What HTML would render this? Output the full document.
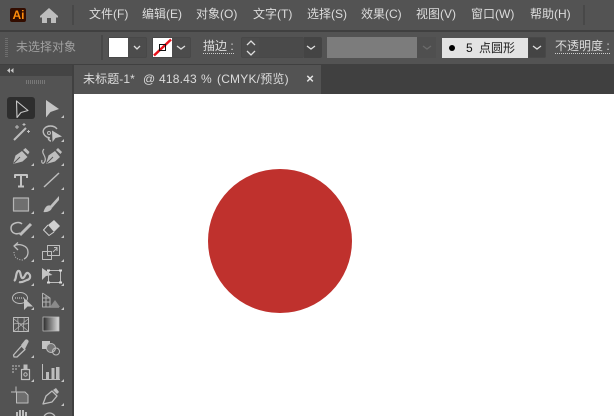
<!DOCTYPE html>
<html><head><meta charset="utf-8"><style>
html,body{margin:0;padding:0;width:614px;height:416px;overflow:hidden;background:#535353}
body{position:relative;font-family:"Liberation Sans","Noto Sans CJK SC",sans-serif}
.a{position:absolute;white-space:nowrap}
.m{top:6px;font-size:12px;line-height:16px;color:#dcdcdc}
.c{font-size:12px;line-height:16px}
.t{top:71px;font-size:12px;line-height:16px;color:#dcdcdc;letter-spacing:.2px}
.box{position:absolute;box-sizing:border-box}
</style></head><body>
<div class="box" style="left:0;top:30px;width:614px;height:2px;background:#404040"></div>
<div class="box" style="left:0;top:64px;width:614px;height:1px;background:#404040"></div>
<div class="box" style="left:0;top:65px;width:72px;height:351px;background:#535353"></div>
<div class="box" style="left:72px;top:65px;width:2px;height:351px;background:#404040"></div>
<div class="box" style="left:0;top:65px;width:72px;height:11px;background:#444"></div>
<div class="box" style="left:74px;top:65px;width:540px;height:29px;background:#404040"></div>
<div class="box" style="left:74px;top:65px;width:247px;height:29px;background:#535353"></div>
<div class="box" style="left:74px;top:94px;width:540px;height:322px;background:#fff"></div>
<div class="box" style="left:208px;top:169px;width:143.500px;height:144px;border-radius:50%;background:#bf312d"></div>

<div class="box" style="left:10px;top:8px;width:16px;height:14px;border-radius:2px;background:#330d00"></div>
<div class="a" style="left:12.500px;top:8px;font-size:12px;line-height:14px;font-weight:bold;color:#ff8c0a">Ai</div>
<div class="box" style="left:72px;top:5px;width:2px;height:20px;background:#484848"></div>
<div class="box" style="left:583px;top:5px;width:2px;height:20px;background:#484848"></div>
<div class="a m" style="left:89px">文件(F)</div>
<div class="a m" style="left:142px">编辑(E)</div>
<div class="a m" style="left:196px">对象(O)</div>
<div class="a m" style="left:253px">文字(T)</div>
<div class="a m" style="left:307px">选择(S)</div>
<div class="a m" style="left:361px">效果(C)</div>
<div class="a m" style="left:416px">视图(V)</div>
<div class="a m" style="left:471px">窗口(W)</div>
<div class="a m" style="left:530px">帮助(H)</div>

<div class="a c" style="left:16px;top:39px;color:#a0a0a0">未选择对象</div>
<div class="box" style="left:101px;top:35px;width:2px;height:25px;background:#484848"></div>
<div class="box" style="left:108px;top:37px;width:39px;height:21px;border:1px solid #484848;border-radius:2px;background:#4c4c4c"></div>
<div class="box" style="left:109px;top:38px;width:19px;height:19px;background:#fff"></div>
<div class="box" style="left:152px;top:37px;width:39px;height:21px;border:1px solid #484848;border-radius:2px;background:#4c4c4c"></div>
<div class="box" style="left:153px;top:38px;width:19px;height:19px;background:#fff"></div>
<div class="a c" style="left:203px;top:39px;color:#dcdcdc;border-bottom:1px dotted #ccc;line-height:14px">描边 :</div>
<div class="box" style="left:241px;top:37px;width:63px;height:21px;border:1px solid #484848;border-radius:2px;background:#4c4c4c"></div>
<div class="box" style="left:259px;top:38px;width:45px;height:19px;background:#4a4a4a"></div>
<div class="box" style="left:304px;top:37px;width:18px;height:21px;background:#444;border-radius:0 2px 2px 0"></div>
<div class="box" style="left:327px;top:37px;width:90px;height:21px;background:#7c7c7c"></div>
<div class="box" style="left:417px;top:37px;width:19px;height:21px;background:#4f4f4f"></div>
<div class="box" style="left:442px;top:38px;width:86px;height:20px;background:#e3e3e3"></div>
<div class="box" style="left:528px;top:37px;width:18px;height:21px;background:#444;border:1px solid #484848;border-radius:0 2px 2px 0"></div>
<div class="box" style="left:449px;top:45px;width:6px;height:6px;border-radius:50%;background:#000"></div>
<div class="a" style="left:466px;top:40px;font-size:12px;line-height:16px;color:#111">5</div>
<div class="a" style="left:479px;top:40px;font-size:12px;line-height:16px;color:#222">点圆形</div>
<div class="a c" style="left:555px;top:39px;color:#dcdcdc;border-bottom:1px dotted #ccc;line-height:14px">不透明度 :</div>

<div class="a t" style="left:83px;letter-spacing:.1px">未标题-1*</div>
<div class="a t" style="left:143px">@</div>
<div class="a t" style="left:159px">418.43</div>
<div class="a t" style="left:201px">%</div>
<div class="a t" style="left:217px">(CMYK/预览)</div>
<div class="a" style="left:306px;top:71px;width:8px;text-align:center;font-size:13px;line-height:16px;font-weight:bold;color:#e6e6e6">×</div>

<svg class="a" style="left:0;top:0" width="614" height="416" viewBox="0 0 614 416" fill="none">
<!-- home -->
<path d="M49 8 L40 16 V17.500 H42 V23 H47 V18 H51 V23 H56 V17.500 H58 V16 Z" fill="#bdbdbd"/>
<!-- grippers -->
<path d="M6.500 38V57" stroke="#6e6e6e" stroke-width="3" stroke-dasharray="1 1"/>
<path d="M26 82H45" stroke="#777" stroke-width="4" stroke-dasharray="1 1"/>
<path d="M10 68L7 70.500L10 73ZM13.500 68L10.500 70.500L13.500 73Z" fill="#c5c5c5"/>
<!-- stroke swatch -->
<path d="M154 55.500L171 39.500" stroke="#e8111a" stroke-width="2.500"/>
<rect x="159.500" y="44.500" width="6" height="6" stroke="#111"/>
<!-- chevrons -->
<g stroke="#dedede" stroke-width="1.300">
<path d="M134 46L137 49L140 46M177 46L181 49L185 46M307 46L311 49L315 46M533 46L537 49L541 46"/>
<path d="M247 45L251 41L255 45M247 51L251 55L255 51"/>
</g>
<path d="M423 46L427 49L431 46" stroke="#6b6b6b" stroke-width="1.300"/>
<!-- selected tool bg -->
<rect x="7" y="97" width="28" height="22" rx="3" fill="#2e2e2e"/>
<g stroke-linejoin="round">
<!-- row 1 -->
<path d="M16.500 101L17 117.500L21 112.500L28 110.500Z" stroke="#c8c8c8" stroke-width="1.100"/>
<path d="M46 100V117.500L50.500 112L59 109Z" fill="#c4c4c4"/>
<!-- wand -->
<path d="M14 140L26 128" stroke="#bdbdbd" stroke-width="2"/>
<path d="M17 125v4M15 127h4M24 123v3M22.500 124.500h3M28.500 130v3M27 131.500h3" stroke="#bdbdbd"/>
<!-- lasso -->
<path d="M50 138C44 137 42 132 44 129C47 125 54 125 57 129M49 137C47 139 50 141 51 141" stroke="#bdbdbd" stroke-width="1.400"/>
<circle cx="49" cy="133" r="1.500" stroke="#bdbdbd"/>
<path d="M52 130.500L52.500 142L55.500 138L62 136.500Z" fill="#c4c4c4"/>
<!-- pen -->
<path d="M13 164L15.500 155.500L22 151L27.500 157L22.500 161.500Z" fill="#bdbdbd"/><path d="M23 150L25.500 148L29.500 152L28 154.500Z" fill="#bdbdbd"/>
<path d="M13.500 163.500L20 157" stroke="#535353"/>
<!-- curvature pen -->
<path d="M46 164L48.500 155.500L55 151L60 157L55 161.500Z" fill="#bdbdbd"/><path d="M56 150L58 148L62 152L60.500 154Z" fill="#bdbdbd"/>
<path d="M46.500 163.500L53 157" stroke="#535353"/>
<path d="M44 149C40 153 47 156 45 161C43.500 165 41 163 42 160" stroke="#bdbdbd" stroke-width="1.200"/>
<!-- T -->
<path d="M15 178V175H27V178M21 175V186.500M18 186.500H24" stroke="#c4c4c4" stroke-width="2"/>
<path d="M44 187L59 173" stroke="#bdbdbd" stroke-width="1.500"/>
<!-- rect -->
<rect x="13.500" y="198" width="15" height="13" stroke="#b5b5b5" stroke-width="1.200" fill="#6f6f6f"/>
<!-- brush -->
<path d="M59 196L50 206L52 208L59 200Z" fill="#c0c0c0"/><path d="M43.500 212C45 207 47 205 50 205.500L52 208C51 211 47 212.500 43.500 212Z" fill="#c0c0c0"/>
<!-- shaper -->
<path d="M22 224C19 221 11 223 11 228C11 233 16 235 20 233" stroke="#bdbdbd" stroke-width="1.500"/>
<path d="M20 235L31 224" stroke="#bdbdbd" stroke-width="3"/>
<!-- eraser -->
<path d="M48 225L54 220L60 226L54 232Z" fill="#d0d0d0"/><path d="M48 225L43.500 230L49 235.500L54 232" stroke="#d0d0d0"/>
<!-- rotate -->
<path d="M14 246C18 243 28 245 28 252C28 256 26 258 24 259" stroke="#bdbdbd" stroke-width="1.300"/>
<path d="M18 242.500L14 246L18 250" stroke="#bdbdbd" stroke-width="1.300"/>
<path d="M14 252C14 257 17 260 23 260" stroke="#bdbdbd" stroke-dasharray="1 1.500"/>
<!-- scale -->
<rect x="42.500" y="251.500" width="9" height="8" stroke="#bdbdbd"/><rect x="47.500" y="245.500" width="12" height="10" stroke="#bdbdbd"/>
<path d="M53 252L57 248M54 247.500H57V251" stroke="#bdbdbd"/>
<!-- warp -->
<path d="M14 281C17 279 15 274 18 271C21 270 20 276 22 278C25 279 25 272 28 273C31 275 31 279 27 280C24 281 22 283 19 282" stroke="#c0c0c0" stroke-width="2.200"/>
<!-- free transform -->
<path d="M42 268V280L46 276L52.500 275Z" fill="#c4c4c4"/>
<rect x="48.500" y="270.500" width="12" height="12" stroke="#bdbdbd"/>
<path d="M47 270.500h3M59 270.500h3M59 282.500h3M47 282.500h3" stroke="#ddd" stroke-width="2"/>
<!-- shape builder -->
<ellipse cx="20" cy="298" rx="7.500" ry="5.500" stroke="#bdbdbd"/>
<path d="M15 298H25" stroke="#ddd" stroke-dasharray="1 1"/>
<path d="M24 298V310L27.500 306.500H33Z" fill="#c4c4c4"/>
<!-- perspective -->
<path d="M42.500 293V307H59M42.500 293L50 298V307M42.500 298H50M42.500 302H50M46 295V307" stroke="#b0b0b0"/>
<path d="M50 307L55 300L60 307Z" fill="#8a8a8a"/>
<!-- mesh -->
<rect x="13.500" y="317.500" width="15" height="14" stroke="#bdbdbd"/>
<path d="M14 324C18 322 24 326 28 323M18 318C17 322 20 326 18 331M24 318C25 322 22 326 24 331M14 319L28 331M28 319L14 331" stroke="#b0b0b0" stroke-width=".8"/>
<!-- gradient -->
<defs><linearGradient id="g"><stop offset="0" stop-color="#2a2a2a"/><stop offset="1" stop-color="#ddd"/></linearGradient></defs>
<rect x="43" y="317" width="16" height="14" fill="url(#g)" stroke="#bbb" stroke-width=".8"/>
<!-- eyedropper -->
<path d="M13.500 355L21.500 346L25 349.500L17 357L14 357Z" stroke="#bdbdbd" stroke-width="1.300"/>
<path d="M21 345L25 340C27 338 30 341 28 343L25 349Z" fill="#bdbdbd"/>
<!-- blend -->
<rect x="42" y="341" width="8" height="8" fill="#c4c4c4"/>
<circle cx="51" cy="348" r="4.500" fill="#777" stroke="#bdbdbd"/><circle cx="56" cy="351.500" r="3.500" stroke="#bdbdbd"/>
<!-- symbol sprayer -->
<path d="M12 365h2v2h-2zM15 365h2v2h-2zM18 365h2v2h-2zM12 368h2v2h-2zM15 368h2v2h-2zM12 371h2v2h-2z" fill="#8a8a8a"/>
<rect x="21.500" y="369.500" width="8" height="10" stroke="#bdbdbd" stroke-width="1.200"/>
<rect x="23.500" y="364.500" width="4" height="4.500" fill="#bdbdbd"/><circle cx="25.500" cy="374.500" r="1.700" stroke="#bdbdbd"/>
<!-- graph -->
<path d="M42.500 364V379.500H60" stroke="#bdbdbd"/>
<path d="M46 372h3v7h-3zM51.500 368h3v11h-3zM56 367h3.500v12h-3.500z" fill="#bdbdbd"/>
<!-- artboard -->
<path d="M16.500 392H25L28 395V403H16.500Z" fill="#6e6e6e" stroke="#bdbdbd"/>
<path d="M11 392H17M16 386.500V392" stroke="#bdbdbd"/>
<!-- slice -->
<path d="M43 404L46 396L52 391L57 396L52 402Z" stroke="#bdbdbd" stroke-width="1.300"/><path d="M53 390L56 388L59 392L57 394Z" fill="#bdbdbd"/>
<!-- hand / zoom -->
<path d="M17 416V412M20 416V410M23 416V410M26 416V412" stroke="#bdbdbd" stroke-width="2"/>
<circle cx="49.500" cy="419" r="6" stroke="#bdbdbd" stroke-width="1.300"/>
</g>
<!-- corner triangles -->
<path d="M64 118v-3l-3 3zM64 142v-3l-3 3zM34 166v-3l-3 3zM64 166v-3l-3 3zM34 190v-3l-3 3zM64 190v-3l-3 3zM34 214v-3l-3 3zM64 214v-3l-3 3zM34 238v-3l-3 3zM64 238v-3l-3 3zM34 262v-3l-3 3zM64 262v-3l-3 3zM34 286v-3l-3 3zM64 286v-3l-3 3zM34 310v-3l-3 3zM64 310v-3l-3 3zM34 358v-3l-3 3zM34 382v-3l-3 3zM64 382v-3l-3 3zM64 406v-3l-3 3z" fill="#c4c4c4"/>
</svg>
</body></html>
